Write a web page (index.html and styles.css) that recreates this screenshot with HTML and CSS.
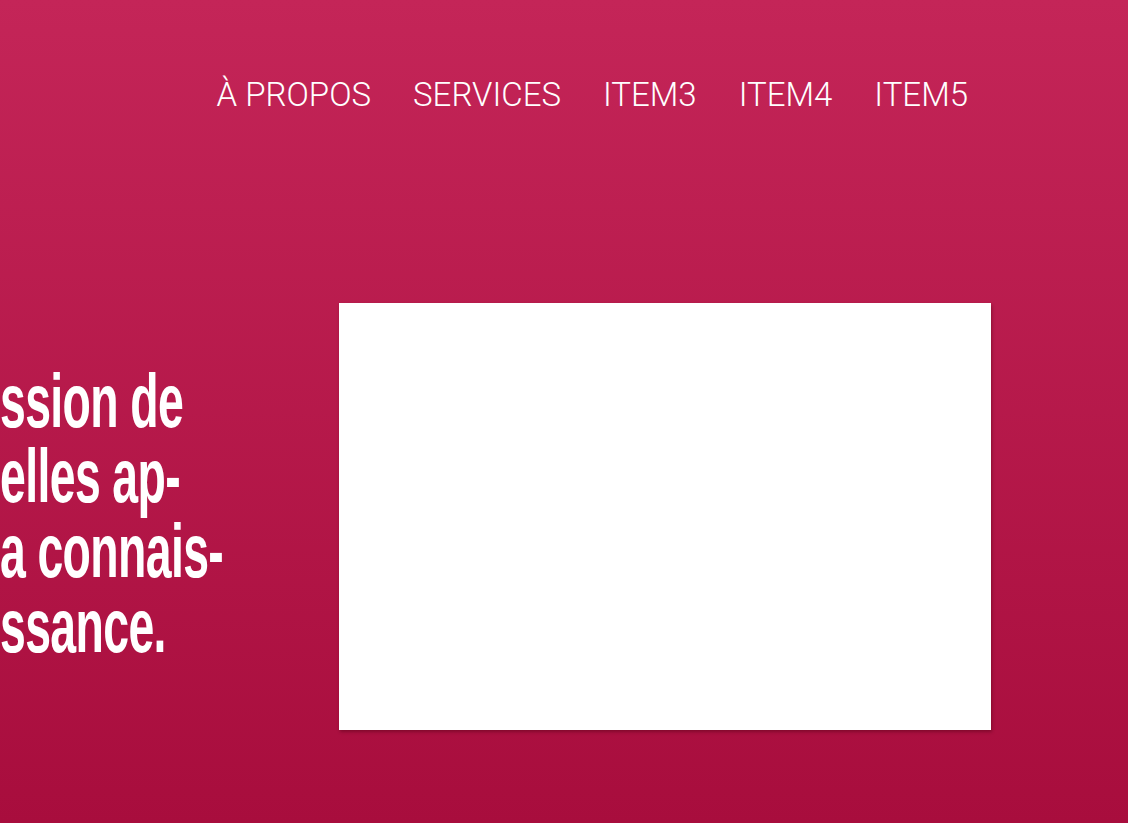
FILE: index.html
```html
<!DOCTYPE html>
<html lang="fr">
<head>
<meta charset="utf-8">
<title>Accueil</title>
<link rel="stylesheet" href="styles.css">
</head>
<body>
<div class="page">
  <header class="topbar">
    <nav class="menu">
      <a class="menu-item" href="#">À PROPOS</a>
      <a class="menu-item" href="#">SERVICES</a>
      <a class="menu-item" href="#">ITEM3</a>
      <a class="menu-item" href="#">ITEM4</a>
      <a class="menu-item" href="#">ITEM5</a>
    </nav>
  </header>
  <main class="hero">
    <div class="hero-text">
      <h1 class="headline">
        <span class="line">ssion de</span>
        <span class="line">elles ap-</span>
        <span class="line">a connais-</span>
        <span class="line">ssance.</span>
      </h1>
    </div>
    <div class="hero-media"></div>
  </main>
</div>
</body>
</html>
```
FILE: styles.css
```css
html, body {
  margin: 0;
  padding: 0;
  height: 100%;
}
body {
  background: linear-gradient(to bottom, #c42558 0%, #a80d3d 100%);
  overflow: hidden;
  font-family: "Roboto", "Liberation Sans", sans-serif;
}
.page {
  height: 823px;
  display: flex;
  flex-direction: column;
}
.topbar {
  display: flex;
  justify-content: flex-end;
  padding: 74px 160px 0 0;
}
.menu {
  display: flex;
  gap: 42px;
}
.menu-item {
  color: #ffffff;
  text-decoration: none;
  font-family: "Roboto", "Liberation Sans", sans-serif;
  font-weight: 300;
  font-size: 33px;
  line-height: 42px;
}
.hero {
  display: grid;
  grid-template-columns: 339px 652px;
  align-items: start;
  padding-top: 187px;
}
.hero-text {
  overflow: hidden;
  padding-top: 60px;
}
.headline {
  margin: 0;
  color: #ffffff;
  font-family: "Liberation Sans", "Arial", sans-serif;
  font-weight: 700;
  font-size: 76px;
  line-height: 75px;
  letter-spacing: -1px;
  transform: scaleX(0.61);
  transform-origin: left top;
  white-space: nowrap;
}
.line {
  display: block;
}
.hero-media {
  height: 427px;
  background: #ffffff;
  box-shadow: 1px 2px 3px rgba(80, 0, 20, 0.45);
}
```
